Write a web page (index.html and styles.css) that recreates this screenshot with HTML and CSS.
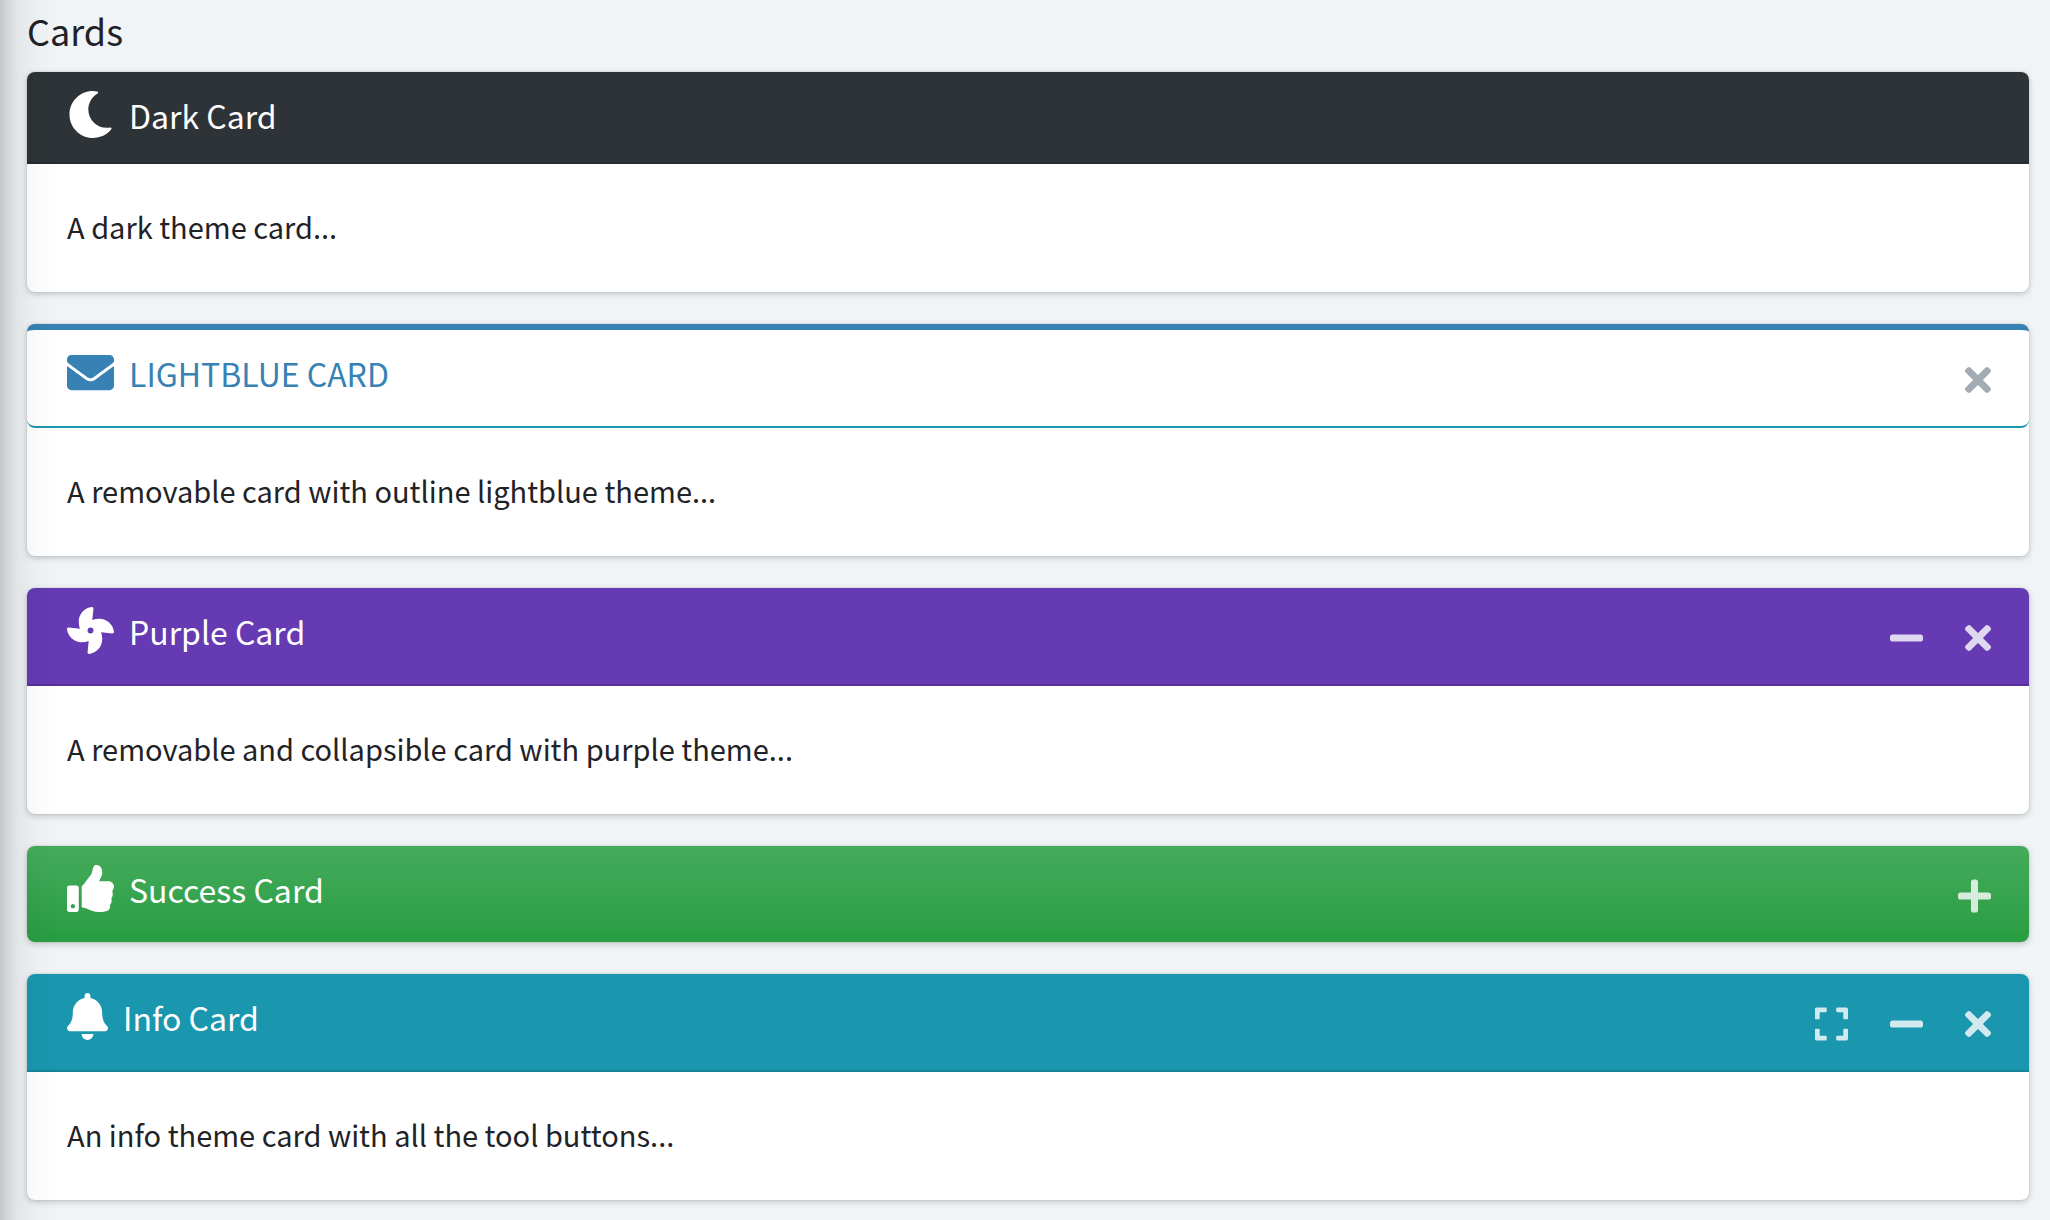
FILE: index.html
```html
<!DOCTYPE html>
<html lang="en">
<head>
<meta charset="utf-8">
<meta name="viewport" content="width=device-width, initial-scale=1">
<title>Cards</title>
<link rel="stylesheet" href="styles.css">
</head>
<body>
<svg class="sprite" aria-hidden="true">
  <symbol id="times" viewBox="0 0 352 512"><path d="M242.72 256l100.07-100.07c12.28-12.28 12.28-32.19 0-44.48l-22.24-22.24c-12.28-12.28-32.19-12.28-44.48 0L176 189.28 75.93 89.21c-12.28-12.28-32.19-12.28-44.48 0L9.21 111.45c-12.28 12.28-12.28 32.19 0 44.48L109.28 256 9.21 356.07c-12.28 12.28-12.28 32.19 0 44.48l22.24 22.24c12.28 12.28 32.2 12.28 44.48 0L176 322.72l100.07 100.07c12.28 12.28 32.2 12.28 44.48 0l22.24-22.24c12.28-12.28 12.28-32.19 0-44.48L242.72 256z"/></symbol>
  <symbol id="minus" viewBox="0 0 448 512"><path d="M416 208H32c-17.67 0-32 14.33-32 32v32c0 17.67 14.33 32 32 32h384c17.67 0 32-14.33 32-32v-32c0-17.67-14.33-32-32-32z"/></symbol>
  <symbol id="plus" viewBox="0 0 448 512"><path d="M416 208H272V64c0-17.67-14.33-32-32-32h-32c-17.67 0-32 14.33-32 32v144H32c-17.67 0-32 14.33-32 32v32c0 17.67 14.33 32 32 32h144v144c0 17.67 14.33 32 32 32h32c17.67 0 32-14.33 32-32V304h144c17.67 0 32-14.33 32-32v-32c0-17.67-14.33-32-32-32z"/></symbol>
  <symbol id="expand" viewBox="0 0 448 512"><path d="M0 180V56c0-13.3 10.7-24 24-24h124c6.6 0 12 5.4 12 12v40c0 6.6-5.4 12-12 12H64v84c0 6.6-5.4 12-12 12H12c-6.6 0-12-5.4-12-12zM288 44v40c0 6.6 5.4 12 12 12h84v84c0 6.6 5.4 12 12 12h40c6.6 0 12-5.4 12-12V56c0-13.3-10.7-24-24-24H300c-6.6 0-12 5.4-12 12zm148 276h-40c-6.6 0-12 5.4-12 12v84h-84c-6.6 0-12 5.4-12 12v40c0 6.6 5.4 12 12 12h124c13.3 0 24-10.7 24-24V332c0-6.6-5.4-12-12-12zM160 468v-40c0-6.6-5.4-12-12-12H64v-84c0-6.6-5.4-12-12-12H12c-6.6 0-12 5.4-12 12v124c0 13.3 10.7 24 24 24h124c6.6 0 12-5.4 12-12z"/></symbol>
</svg>

<main class="content">
  <h1 class="heading">Cards</h1>

  <section class="card card-dark">
    <header class="card-header">
      <h2 class="card-title">
        <svg class="icon" viewBox="0 0 512 512" aria-hidden="true"><path d="M283.211 512c78.962 0 151.079-35.925 198.857-94.792 7.068-8.708-.639-21.43-11.562-19.35-124.203 23.654-238.262-71.576-238.262-196.954 0-72.222 38.662-138.635 101.498-174.394 9.686-5.512 7.25-20.197-3.756-22.23A258.156 258.156 0 0 0 283.211 0c-141.309 0-256 114.511-256 256 0 141.309 114.511 256 256 256z"/></svg>
        <span>Dark Card</span>
      </h2>
    </header>
    <div class="card-body">A dark theme card...</div>
  </section>

  <section class="card card-outline">
    <header class="card-header">
      <h2 class="card-title">
        <svg class="icon" viewBox="0 0 512 512" aria-hidden="true"><path d="M502.3 190.8c3.9-3.1 9.7-.2 9.7 4.7V400c0 26.5-21.5 48-48 48H48c-26.5 0-48-21.5-48-48V195.6c0-5 5.7-7.8 9.7-4.7 22.4 17.4 52.1 39.5 154.1 113.6 21.1 15.4 56.7 47.8 92.2 47.6 35.7.3 72-32.8 92.3-47.6 102-74.1 131.6-96.3 154-113.7zM256 320c23.2.4 56.6-29.2 73.4-41.4 132.7-96.3 142.8-104.7 173.4-128.7 5.8-4.5 9.2-11.5 9.2-18.9v-19c0-26.5-21.5-48-48-48H48c-26.5 0-48 21.5-48 48v19c0 7.4 3.4 14.3 9.2 18.9 30.6 23.9 40.7 32.4 173.4 128.7 16.8 12.2 50.2 41.8 73.4 41.4z"/></svg>
        <span>LIGHTBLUE CARD</span>
      </h2>
      <div class="card-tools">
        <button class="tool" type="button" aria-label="Remove"><svg class="tool-icon narrow"><use href="#times"/></svg></button>
      </div>
    </header>
    <div class="card-body">A removable card with outline lightblue theme...</div>
  </section>

  <section class="card card-purple">
    <header class="card-header">
      <h2 class="card-title">
        <svg class="icon" viewBox="0 0 512 512" aria-hidden="true"><path d="M352.57 128c-28.09 0-54.09 4.52-77.06 12.86l12.41-123.11C289 7.31 279.81-1.18 269.33.13 189.63 10.13 128 77.64 128 159.43c0 28.09 4.52 54.09 12.86 77.06L17.75 224.08C7.31 223-1.18 232.19.13 242.67c10 79.7 77.51 141.33 159.3 141.33 28.09 0 54.09-4.52 77.06-12.86l-12.41 123.11c-1.05 10.43 8.11 18.93 18.59 17.62 79.7-10 141.33-77.51 141.33-159.3 0-28.09-4.52-54.09-12.86-77.06l123.11 12.41c10.44 1.05 18.93-8.11 17.62-18.59-10-79.7-77.51-141.33-159.3-141.33zM256 288a32 32 0 1 1 32-32 32 32 0 0 1-32 32z"/></svg>
        <span>Purple Card</span>
      </h2>
      <div class="card-tools">
        <button class="tool" type="button" aria-label="Collapse"><svg class="tool-icon"><use href="#minus"/></svg></button>
        <button class="tool" type="button" aria-label="Remove"><svg class="tool-icon narrow"><use href="#times"/></svg></button>
      </div>
    </header>
    <div class="card-body">A removable and collapsible card with purple theme...</div>
  </section>

  <section class="card card-success">
    <header class="card-header">
      <h2 class="card-title">
        <svg class="icon" viewBox="0 0 512 512" aria-hidden="true"><path d="M104 224H24c-13.255 0-24 10.745-24 24v240c0 13.255 10.745 24 24 24h80c13.255 0 24-10.745 24-24V248c0-13.255-10.745-24-24-24zM64 472c-13.255 0-24-10.745-24-24s10.745-24 24-24 24 10.745 24 24-10.745 24-24 24zM384 81.452c0 42.416-25.97 66.208-33.277 94.548h101.723c33.397 0 59.397 27.746 59.553 58.098.084 17.938-7.546 37.249-19.439 49.197l-.11.11c9.836 23.337 8.237 56.037-9.308 79.469 8.681 25.895-.069 57.704-16.382 74.757 4.298 17.598 2.244 32.575-6.148 44.632C440.202 511.587 389.616 512 346.839 512l-2.845-.001c-48.287-.017-87.806-17.598-119.56-31.725-15.957-7.099-36.821-15.887-52.651-16.178-6.54-.12-11.783-5.457-11.783-11.998v-213.77c0-3.2 1.282-6.271 3.558-8.521 39.614-39.144 56.648-80.587 89.117-113.111 14.804-14.832 20.188-37.236 25.393-58.902C282.515 39.293 291.817 0 312 0c24 0 72 8 72 81.452z"/></svg>
        <span>Success Card</span>
      </h2>
      <div class="card-tools">
        <button class="tool" type="button" aria-label="Expand"><svg class="tool-icon"><use href="#plus"/></svg></button>
      </div>
    </header>
  </section>

  <section class="card card-info">
    <header class="card-header">
      <h2 class="card-title">
        <svg class="icon icon-bell" viewBox="0 0 448 512" aria-hidden="true"><path d="M224 512c35.32 0 63.97-28.65 63.97-64H160.03c0 35.35 28.65 64 63.97 64zm215.39-149.71c-19.32-20.76-55.47-51.99-55.47-154.29 0-77.7-54.48-139.9-127.94-155.16V32c0-17.67-14.32-32-31.98-32s-31.98 14.33-31.98 32v20.84C118.56 68.1 64.08 130.3 64.08 208c0 102.3-36.15 133.53-55.47 154.29-6 6.45-8.66 14.16-8.61 21.71.11 16.4 12.98 32 32.1 32h383.8c19.12 0 32-15.6 32.1-32 .05-7.55-2.61-15.27-8.61-21.71z"/></svg>
        <span>Info Card</span>
      </h2>
      <div class="card-tools">
        <button class="tool" type="button" aria-label="Maximize"><svg class="tool-icon"><use href="#expand"/></svg></button>
        <button class="tool" type="button" aria-label="Collapse"><svg class="tool-icon"><use href="#minus"/></svg></button>
        <button class="tool" type="button" aria-label="Remove"><svg class="tool-icon narrow"><use href="#times"/></svg></button>
      </div>
    </header>
    <div class="card-body">An info theme card with all the tool buttons...</div>
  </section>
</main>
</body>
</html>
```
FILE: styles.css
```css
* {
  box-sizing: border-box;
}

body {
  margin: 0;
  background: #f0f4f7;
  color: #1f2226;
  font-family: "Noto Sans CJK SC", "Noto Sans", sans-serif;
  font-size: 29px;
  line-height: 48px;
}

/* Shadow cast by the sidebar beyond the left edge */
body::before {
  content: "";
  position: fixed;
  z-index: 1;
  top: -100px;
  bottom: -100px;
  left: -100px;
  width: 100px;
  box-shadow: 0 28px 56px rgba(0, 0, 0, .21), 0 20px 20px rgba(0, 0, 0, .18);
  pointer-events: none;
}

.sprite {
  display: none;
}

.content {
  display: flex;
  flex-direction: column;
  gap: 32px;
  padding: 6px 21px 20px 27px;
}

.heading {
  margin: 0 0 -14px;
  font-size: 36px;
  font-weight: 400;
  line-height: 48px;
}

.card {
  border-radius: 8px;
  background: #fff;
  box-shadow: 0 0 2px rgba(0, 0, 0, .13), 0 2px 6px rgba(0, 0, 0, .2);
}

.card-header {
  display: flex;
  align-items: flex-start;
  justify-content: space-between;
  padding: 24px 38px 20px 40px;
  border-bottom: 2px solid rgba(0, 0, 0, .13);
  border-radius: 8px 8px 0 0;
  color: #fff;
}

.card-title {
  display: flex;
  gap: 15px;
  margin: 0;
  font-size: 32px;
  font-weight: 400;
  line-height: 38px;
}

.icon {
  width: 47px;
  height: 47px;
  margin-top: -5px;
  margin-bottom: 4px;
  fill: currentColor;
}

.icon-bell {
  width: 41px;
}

.card-tools {
  display: flex;
  gap: 42px;
}

.tool {
  display: flex;
  padding: 7px 0;
  border: 0;
  background: none;
  color: rgba(255, 255, 255, .8);
  cursor: pointer;
}

.tool-icon {
  width: 33px;
  height: 38px;
  fill: currentColor;
}

.tool-icon.narrow {
  width: 26px;
}

.card-body {
  padding: 38px 40px 42px;
}

.card-dark .card-header {
  background: #2e3337;
}

.card-outline {
  border-top: 6px solid #3781b4;
}

.card-outline .card-header {
  border-bottom-color: #1a97ae;
  border-radius: 0 0 8px 8px;
  color: #3781b4;
}

.card-outline .tool {
  color: #a3abb5;
}

.card-purple .card-header {
  background: #653ab2;
}

.card-success .card-header {
  border-bottom: 0;
  border-radius: 8px;
  background: linear-gradient(#45ab5c, #299d42);
}

.card-info .card-header {
  background: #1a97ae;
}
```
